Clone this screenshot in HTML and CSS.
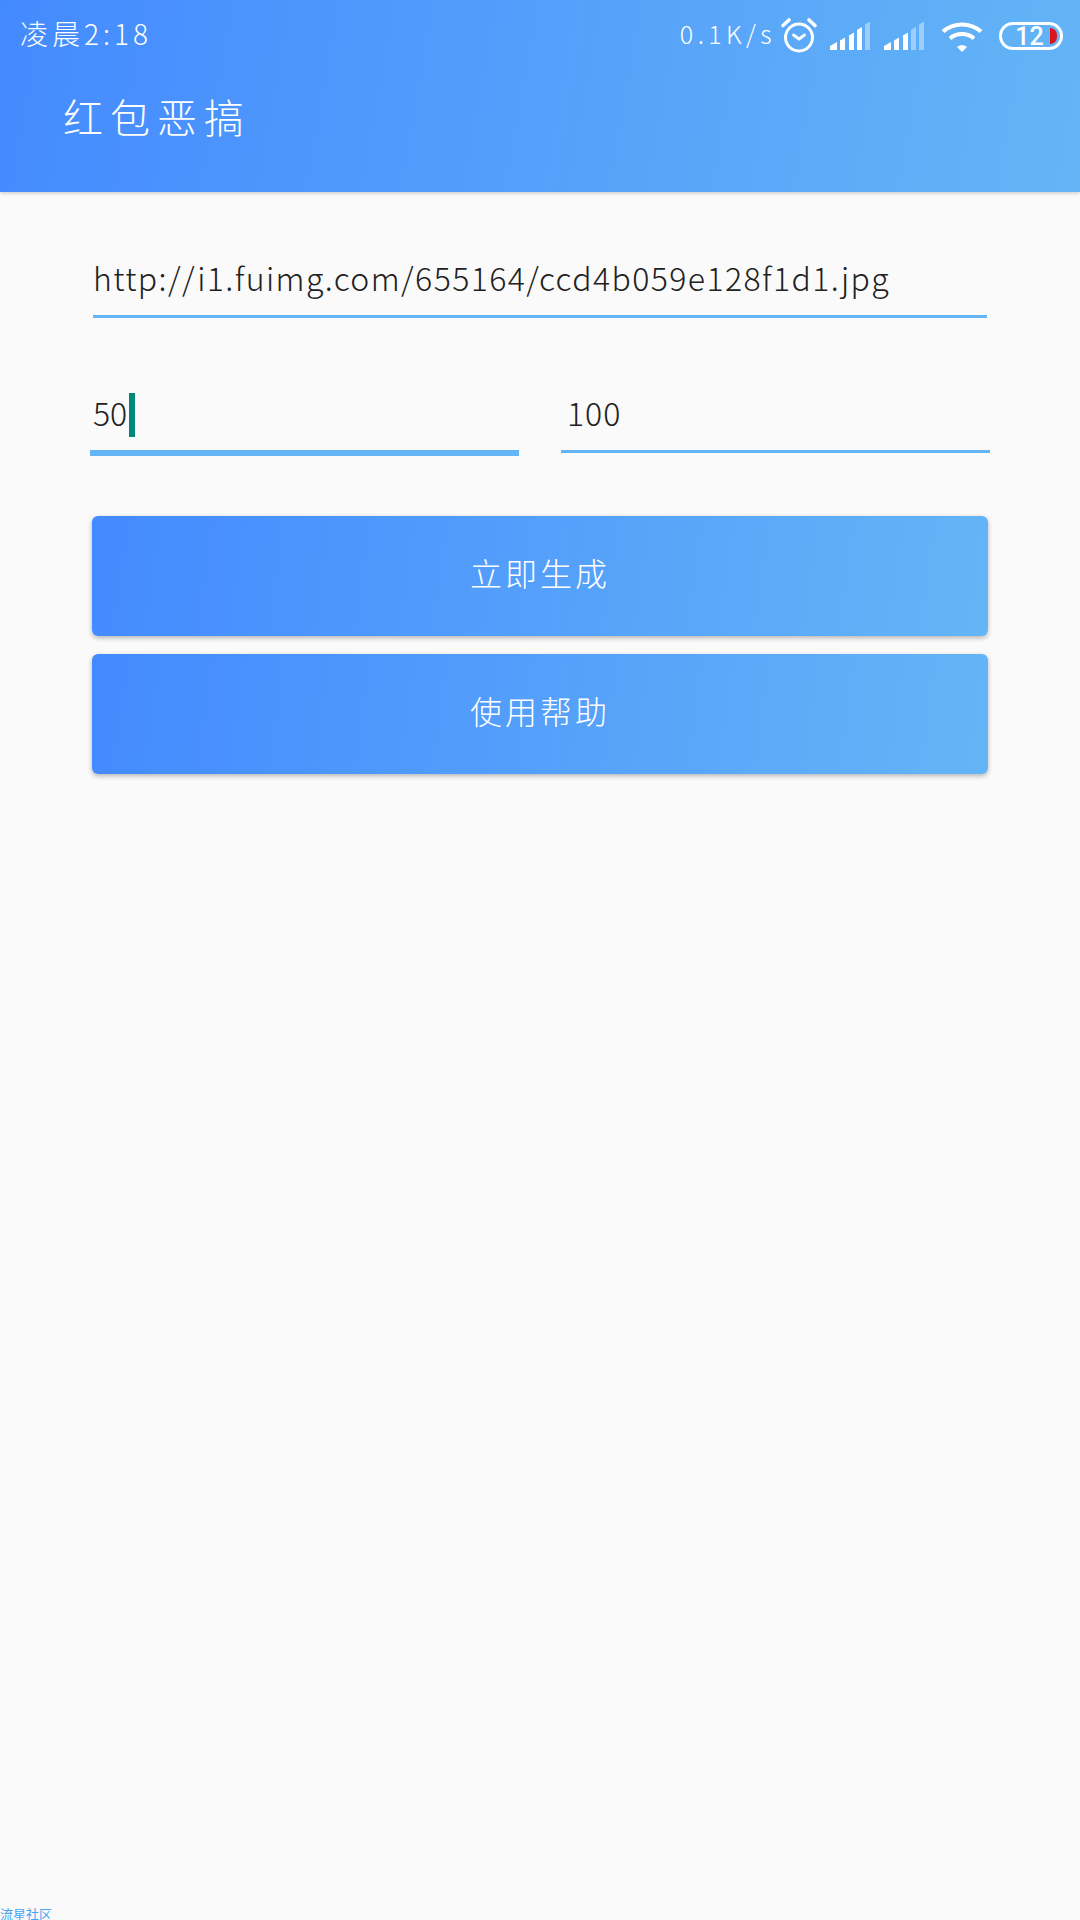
FILE: index.html
```html
<!DOCTYPE html>
<html lang="zh-CN">
<head>
<meta charset="utf-8">
<title>红包恶搞</title>
<link rel="stylesheet" href="styles.css">
</head>
<body>
<div class="page">
  <header class="appbar">
    <div class="status">
      <span class="clock">凌晨2:18</span>
      <div class="status-right">
        <span class="speed">0.1K/s</span>
        <svg class="alarm" width="40" height="40" viewBox="0 0 40 40" fill="none" stroke="#fff" stroke-width="3" stroke-linecap="round" stroke-linejoin="round">
          <circle cx="20" cy="21.5" r="13.5"/>
          <path d="M4 9.500 L10 4 M36 9.500 L30 4" stroke-width="3.6"/>
          <path d="M14.500 19 L20 23 L25.500 19" stroke-width="2.8"/>
        </svg>
        <svg class="signal" width="40" height="30" viewBox="0 0 40 30" fill="#fff">
          <polygon points="0,30 0,26 7,22 7,30"/>
          <polygon points="10,30 10,20.500 15,17.500 15,30"/>
          <polygon points="19,30 19,15.500 24,12.500 24,30"/>
          <polygon points="27,30 27,10 32,7 32,30"/>
          <polygon points="35,30 35,4.500 40,1.500 40,30" fill-opacity=".4"/>
        </svg>
        <svg class="signal" width="40" height="30" viewBox="0 0 40 30" fill="#fff">
          <polygon points="0,30 0,26 7,22 7,30"/>
          <polygon points="10,30 10,20.500 15,17.500 15,30"/>
          <polygon points="19,30 19,15.500 24,12.500 24,30"/>
          <polygon points="27,30 27,10 32,7 32,30" fill-opacity=".4"/>
          <polygon points="35,30 35,4.500 40,1.500 40,30" fill-opacity=".4"/>
        </svg>
        <svg class="wifi" width="42" height="30" viewBox="0 0 42 30" fill="none" stroke="#fff" stroke-width="4">
          <path d="M2 9.500 C12.500 0 29.500 0 40 9.500"/>
          <path d="M9 16.500 C15.500 10.500 26.500 10.500 33 16.500"/>
          <path d="M21 30 L16 25 Q21 21 26 25 Z" fill="#fff" stroke="none"/>
        </svg>
        <div class="battery"><span class="battery-num">12</span><span class="battery-level"></span></div>
      </div>
    </div>
    <h1 class="title">红包恶搞</h1>
  </header>
  <main class="form">
    <div class="field field-url">http://i1.fuimg.com/655164/ccd4b059e128f1d1.jpg</div>
    <div class="range">
      <div class="field field-active"><span>50</span><span class="caret"></span></div>
      <div class="field field-plain">100</div>
    </div>
    <div class="actions">
      <button class="btn" type="button">立即生成</button>
      <button class="btn" type="button">使用帮助</button>
    </div>
  </main>
  <footer class="brand">流星社区</footer>
</div>
</body>
</html>
```

FILE: styles.css
```css
* { box-sizing: border-box; }
html, body { margin: 0; padding: 0; }
body {
  width: 1080px;
  height: 1920px;
  overflow: hidden;
  background: #fafafa;
  font-family: "Noto Sans CJK SC", "Noto Sans", sans-serif;
  font-weight: 300;
}
.page { display: flex; flex-direction: column; height: 1920px; }
.appbar {
  height: 192px;
  background: linear-gradient(100deg, #448aff, #64b5f6);
  box-shadow: 0 1px 4px rgba(0, 0, 0, .22);
  color: #fff;
  display: flex;
  flex-direction: column;
}
.status {
  height: 66px;
  display: flex;
  align-items: center;
  justify-content: space-between;
  padding: 0 17px 0 20px;
}
.clock { font-size: 28px; letter-spacing: 4px; line-height: 1; }
.status-right { display: flex; align-items: center; margin-top: 6px; }
.speed { font-size: 25px; letter-spacing: 4.4px; line-height: 1; margin: 0 3px 6px 0; }
.signal { margin-left: 11px; align-self: flex-end; margin-bottom: 6px; }
.signal + .signal { margin-left: 14px; }
.wifi { margin-left: 17px; margin-top: 2px; }
.battery {
  position: relative;
  width: 64px;
  height: 28px;
  margin-left: 16px;
  border: 3px solid #fff;
  border-radius: 14px;
  display: flex;
  align-items: center;
  justify-content: center;
}
.battery-num {
  font-family: "Roboto", sans-serif;
  font-weight: 500;
  font-size: 25px;
  line-height: 1;
  margin-right: 3px;
}
.battery-level {
  position: absolute;
  right: 3px;
  top: 3px;
  width: 7px;
  height: 16px;
  background: #d8141c;
  border-radius: 0 8px 8px 0;
}
.title {
  margin: 26px 0 0 63px;
  font-size: 40px;
  font-weight: 300;
  letter-spacing: 7px;
  line-height: 48px;
}
.form { padding: 56px 90px 0; display: flex; flex-direction: column; }
.field {
  color: #212121;
  line-height: 48px;
  border-bottom: 3px solid #64b5f6;
}
.field-url {
  margin: 0 3px;
  height: 70px;
  padding-top: 5px;
  font-size: 32px;
  letter-spacing: 1.4px;
  white-space: nowrap;
}
.range {
  margin-top: 66px;
  display: flex;
  justify-content: space-between;
  align-items: flex-start;
}
.range .field { width: 429px; font-size: 32px; }
.field-active {
  height: 72px;
  border-bottom-width: 6px;
  display: flex;
  align-items: flex-start;
  padding: 0 0 0 3px;
}
.field-active span:first-child { line-height: 44px; padding-top: 6px; }
.caret { width: 6px; height: 44px; margin: 9px 0 0 2px; background: #00897b; }
.field-plain {
  height: 69px;
  padding: 6px 0 0 6px;
  line-height: 44px;
  letter-spacing: 1px;
}
.actions { margin-top: 60px; padding: 0 2px; display: flex; flex-direction: column; gap: 18px; }
.btn {
  height: 120px;
  border: 0;
  border-radius: 6px;
  background: linear-gradient(97.6deg, #448aff, #64b5f6);
  box-shadow: 0 2px 5px rgba(0, 0, 0, .28);
  color: #fff;
  font-family: inherit;
  font-weight: 300;
  font-size: 32px;
  letter-spacing: 3px;
  padding: 0 0 8px;
}
.brand {
  margin-top: auto;
  font-size: 13px;
  font-weight: 400;
  line-height: 13px;
  height: 13px;
  color: #42a5f5;
  white-space: nowrap;
}
```
